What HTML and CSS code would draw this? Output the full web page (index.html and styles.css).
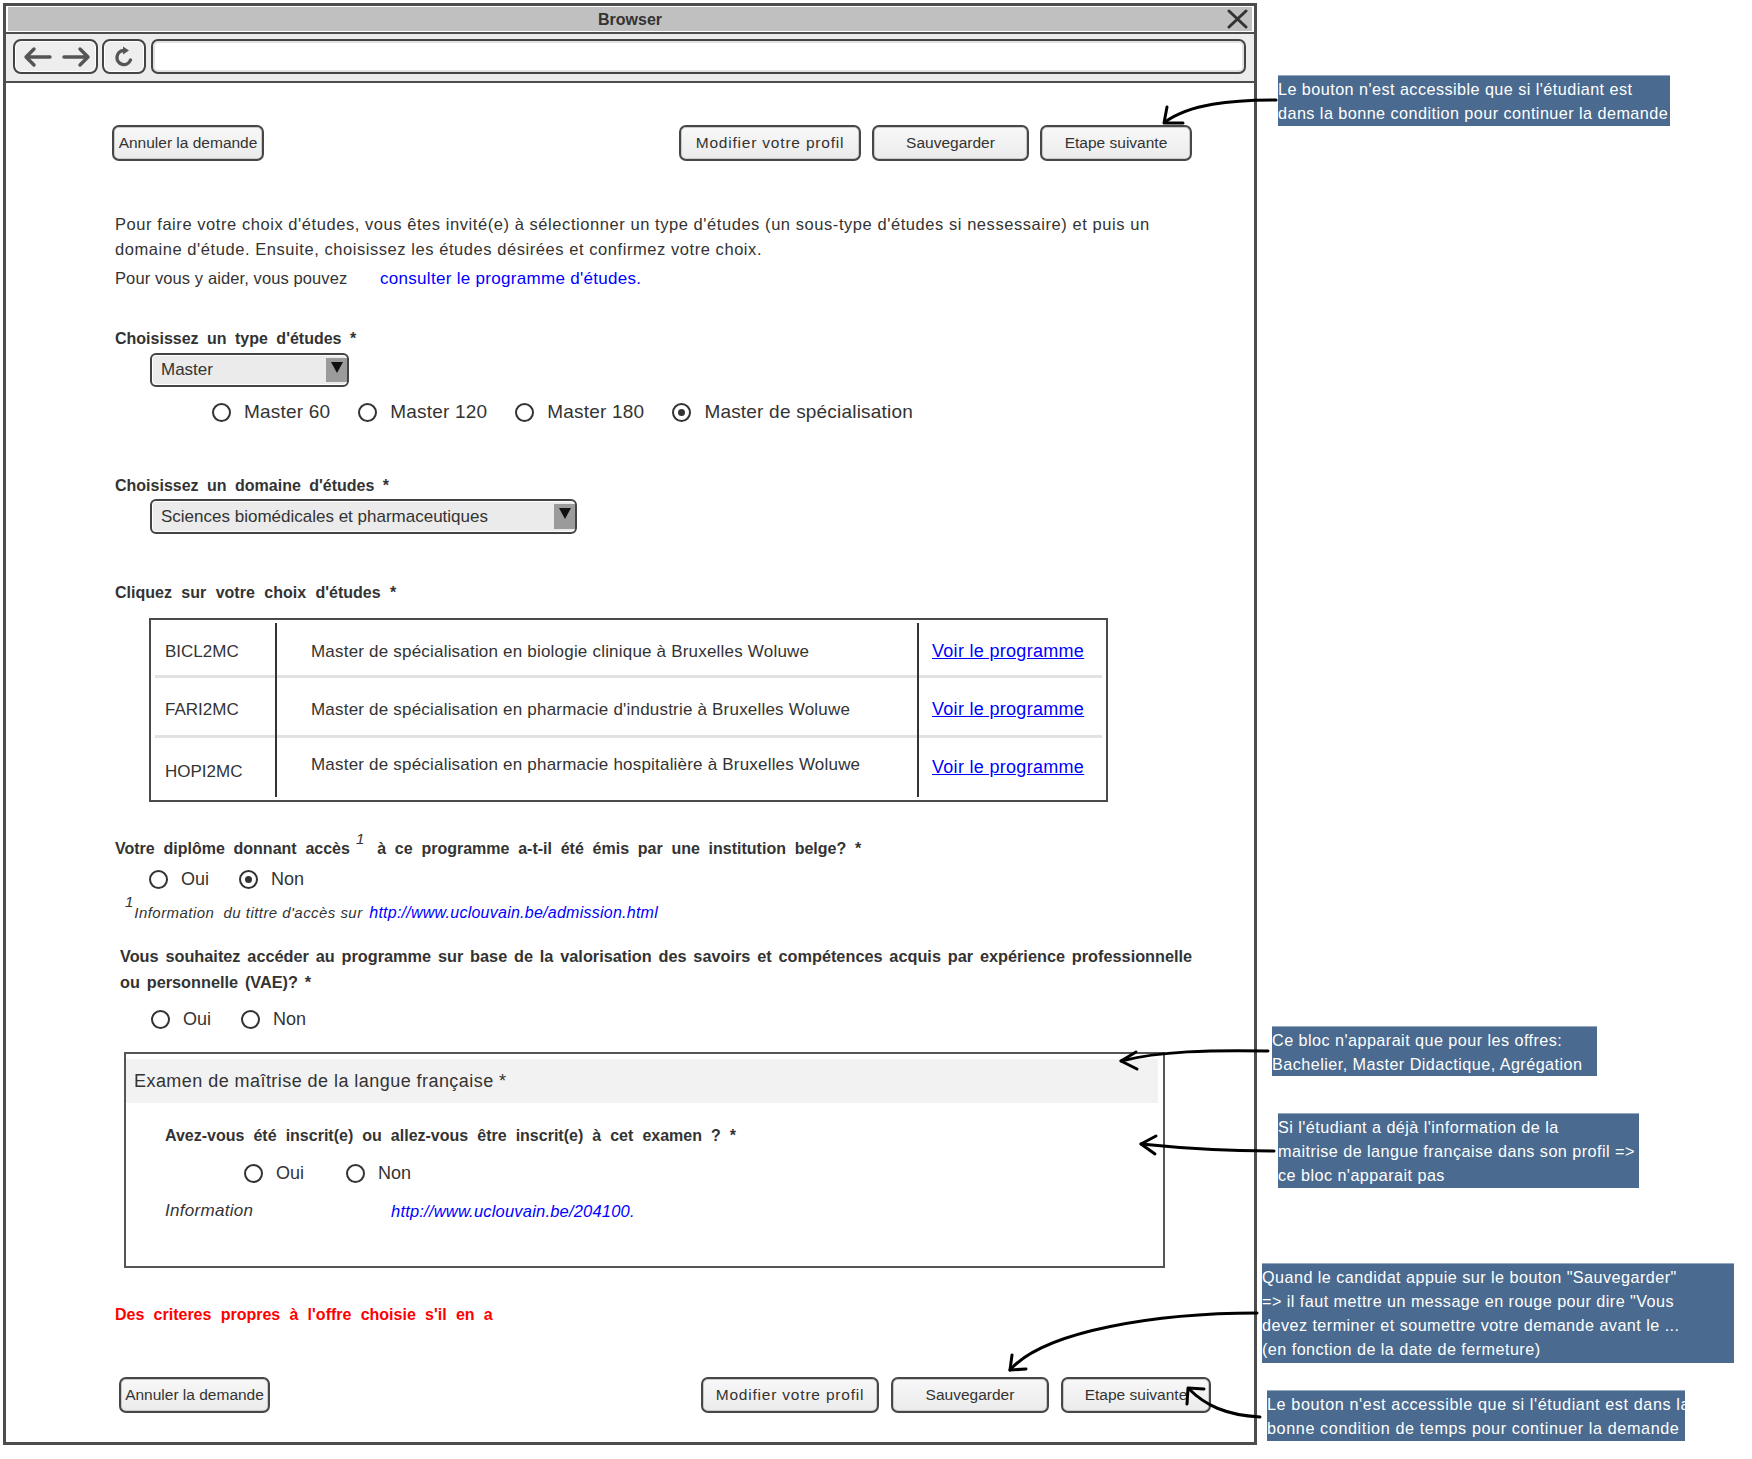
FILE: index.html
```html
<!DOCTYPE html>
<html lang="fr">
<head>
<meta charset="utf-8">
<title>Choix d'études</title>
<link rel="stylesheet" href="styles.css">
</head>
<body>
<div class="canvas">
  <div class="window">
    <div class="titlebar">
      <span></span>
      <span class="title">Browser</span>
      <svg class="close" width="21" height="20" viewBox="0 0 21 20"><path d="M2 2 L19 18 M19 2 L2 18" stroke="#333" stroke-width="3" stroke-linecap="round" fill="none"/></svg>
    </div>
    <div class="toolbar">
      <div class="tbtn navbtn">
        <svg width="76" height="24" viewBox="0 0 76 24"><path d="M8 12 H32 M16 4 L8 12 L16 20 M46 12 H70 M62 4 L70 12 L62 20" stroke="#555" stroke-width="3.4" stroke-linecap="round" stroke-linejoin="round" fill="none"/></svg>
      </div>
      <div class="tbtn reload">
        <svg width="22" height="24" viewBox="0 0 22 24"><path d="M11 5.5 A7 7 0 1 0 17.5 15" stroke="#555" stroke-width="3.4" fill="none" stroke-linecap="round"/><path d="M10 1.5 L16 5.5 L10 9.5 Z" fill="#555"/></svg>
      </div>
      <div class="address"></div>
    </div>
    <div class="content">
      <div class="btnrow btnrow-top">
        <div class="btn b-cancel">Annuler la demande</div>
        <div class="btngroup">
          <div class="btn b-modify">Modifier votre profil</div>
          <div class="btn b-save">Sauvegarder</div>
          <div class="btn b-next">Etape suivante</div>
        </div>
      </div>
      <div class="form">
        <p class="intro">Pour faire votre choix d'études, vous êtes invité(e) à sélectionner un type d'études (un sous-type d'études si nessessaire) et puis un<br>domaine d'étude. Ensuite, choisissez les études désirées et confirmez votre choix.</p>
        <p class="intro2">Pour vous y aider, vous pouvez <a class="link">consulter le programme d'études.</a></p>

        <p class="label l1">Choisissez un type d'études *</p>
        <div class="select s1"><span class="select-text">Master</span><span class="select-arrow"><span class="tri"></span></span></div>
        <div class="radios r1">
          <span class="radio"><span class="circle"></span>Master 60</span>
          <span class="radio"><span class="circle"></span>Master 120</span>
          <span class="radio"><span class="circle"></span>Master 180</span>
          <span class="radio"><span class="circle on"></span>Master de spécialisation</span>
        </div>

        <p class="label l2">Choisissez un domaine d'études *</p>
        <div class="select s2"><span class="select-text">Sciences biomédicales et pharmaceutiques</span><span class="select-arrow"><span class="tri"></span></span></div>

        <p class="label l3">Cliquez sur votre choix d'études *</p>
        <div class="table">
          <div class="col col-code">
            <div class="cell c1">BICL2MC</div>
            <div class="cell c2">FARI2MC</div>
            <div class="cell c3 code3">HOPI2MC</div>
          </div>
          <div class="col col-desc">
            <div class="cell c1">Master de spécialisation en biologie clinique à Bruxelles Woluwe</div>
            <div class="cell c2">Master de spécialisation en pharmacie d'industrie à Bruxelles Woluwe</div>
            <div class="cell c3 desc3">Master de spécialisation en pharmacie hospitalière à Bruxelles Woluwe</div>
          </div>
          <div class="col col-link">
            <div class="cell c1"><a class="tlink">Voir le programme</a></div>
            <div class="cell c2"><a class="tlink">Voir le programme</a></div>
            <div class="cell c3"><a class="tlink">Voir le programme</a></div>
          </div>
        </div>

        <p class="label q1">Votre diplôme donnant accès<span class="fn">1</span>à ce programme a-t-il été émis par une institution belge? *</p>
        <div class="radios r2">
          <span class="radio"><span class="circle"></span>Oui</span>
          <span class="radio"><span class="circle on"></span>Non</span>
        </div>
        <p class="footnote"><span class="fn fn2">1</span>Information&nbsp; du tittre d'accès sur <a class="flink">http://www.uclouvain.be/admission.html</a></p>

        <p class="label q2">Vous souhaitez accéder au programme sur base de la valorisation des savoirs et compétences acquis par expérience professionnelle<br>ou personnelle (VAE)? *</p>
        <div class="radios r3">
          <span class="radio"><span class="circle"></span>Oui</span>
          <span class="radio"><span class="circle"></span>Non</span>
        </div>

        <div class="box">
          <div class="box-head">Examen de maîtrise de la langue française *</div>
          <p class="label q3">Avez-vous été inscrit(e) ou allez-vous être inscrit(e) à cet examen ? *</p>
          <div class="radios r4">
            <span class="radio"><span class="circle"></span>Oui</span>
            <span class="radio"><span class="circle"></span>Non</span>
          </div>
          <p class="info"><span class="info-label">Information</span><a class="ilink">http://www.uclouvain.be/204100.</a></p>
        </div>

        <p class="red">Des criteres propres à l'offre choisie s'il en a</p>
      </div>
      <div class="btnrow btnrow-bottom">
        <div class="btn bb-cancel">Annuler la demande</div>
        <div class="btngroup btngroup-bottom">
          <div class="btn bb-modify">Modifier votre profil</div>
          <div class="btn bb-save">Sauvegarder</div>
          <div class="btn bb-next">Etape suivante</div>
        </div>
      </div>
    </div>
  </div>

  <div class="notes">
    <div class="note n1">Le bouton n'est accessible que si l'étudiant est<br>dans la bonne condition pour continuer la demande</div>
    <div class="note n2">Ce bloc n'apparait que pour les offres:<br>Bachelier, Master Didactique, Agrégation</div>
    <div class="note n3">Si l'étudiant a déjà l'information de la<br>maitrise de langue française dans son profil =&gt;<br>ce bloc n'apparait pas</div>
    <div class="note n4">Quand le candidat appuie sur le bouton "Sauvegarder"<br>=&gt; il faut mettre un message en rouge pour dire "Vous<br>devez terminer et soumettre votre demande avant le ...<br>(en fonction de la date de fermeture)</div>
    <div class="note n5">Le bouton n'est accessible que si l'étudiant est dans la<br>bonne condition de temps pour continuer la demande</div>
  </div>

  <svg class="arrows" width="1752" height="1459" viewBox="0 0 1752 1459">
    <g stroke="#000" stroke-width="3" fill="none" stroke-linecap="round" stroke-linejoin="round">
      <path d="M1276 100 C1230 100 1190 104 1165 122"/>
      <path d="M1167 107 L1164 123 L1183 123"/>
      <path d="M1268 1051 C1210 1050 1160 1051 1121 1061"/>
      <path d="M1136 1052 L1121 1061 L1137 1069"/>
      <path d="M1274 1151 C1220 1151 1180 1148 1141 1144"/>
      <path d="M1156 1136 L1141 1144 L1155 1154"/>
      <path d="M1257 1313 C1160 1313 1045 1330 1010 1370"/>
      <path d="M1012 1355 L1010 1370 L1026 1369"/>
      <path d="M1260 1417 C1225 1415 1205 1405 1189 1389"/>
      <path d="M1187 1404 L1188 1388 L1204 1389"/>
    </g>
  </svg>
</div>
</body>
</html>
```

FILE: styles.css
```css
* { box-sizing: border-box; }

body {
  margin: 0;
  background: #fff;
  font-family: "Liberation Sans", Arial, sans-serif;
  color: #333;
}

p { margin: 0; }

.canvas {
  position: relative;
  display: flex;
  align-items: flex-start;
  width: 1752px;
  height: 1459px;
  overflow: hidden;
}

/* ---------- browser window ---------- */
.window {
  margin: 3px 0 0 3px;
  width: 1254px;
  height: 1442px;
  border: 3px solid #4d4d4d;
  display: flex;
  flex-direction: column;
  flex: none;
}

.titlebar {
  margin: 1px 2px 1px;
  height: 24px;
  background: #c0c0c0;
  display: grid;
  grid-template-columns: 1fr auto 1fr;
  align-items: center;
}

.title {
  font-weight: bold;
  font-size: 16px;
  color: #333;
  padding-top: 2px;
}

.close {
  justify-self: end;
  margin-right: 4px;
}

.toolbar {
  height: 51px;
  border-top: 2px solid #4d4d4d;
  border-bottom: 2px solid #4d4d4d;
  background: #ececec;
  padding: 5px 8px 5px 7px;
  display: flex;
  gap: 4px;
}

.tbtn {
  height: 35px;
  border: 2px solid #444;
  border-radius: 8px;
  background: #eeeeee;
  box-shadow: inset 0 0 0 1px #fff;
  display: flex;
  align-items: center;
  justify-content: center;
}

.navbtn { width: 85px; }
.reload { width: 44px; margin-right: 1px; }

.address {
  flex: 1;
  height: 35px;
  border: 2px solid #444;
  border-radius: 7px;
  background: #fff;
  box-shadow: inset 0 0 0 2px #e2e2e2;
}

/* ---------- content ---------- */
.content {
  flex: 1;
  padding: 42px 62px 0 106px;
}

.btnrow {
  display: flex;
  justify-content: space-between;
  align-items: center;
  height: 36px;
}

.btnrow-bottom {
  margin: 51px -19px 0 7px;
}

.btngroup {
  display: flex;
  gap: 11px;
}

.btngroup-bottom { gap: 12px; }

.btn {
  height: 36px;
  border: 2px solid #474747;
  border-radius: 7px;
  background: linear-gradient(#f8f8f8, #ebebeb);
  box-shadow: inset 0 0 0 1px #c9c9c9;
  display: flex;
  align-items: center;
  justify-content: center;
  font-size: 15.5px;
  color: #333;
  white-space: nowrap;
}

.b-cancel { width: 152px; }
.b-modify { width: 182px; letter-spacing: 0.8px; }
.b-save { width: 157px; }
.b-next { width: 152px; }

.bb-cancel { width: 151px; }
.bb-modify { width: 178px; letter-spacing: 0.8px; }
.bb-save { width: 158px; }
.bb-next { width: 150px; }

.form { margin-left: 3px; }

.intro {
  margin-top: 51px;
  font-size: 16.5px;
  letter-spacing: 0.56px;
  line-height: 25px;
}

.intro2 {
  margin-top: 4px;
  font-size: 16.5px;
  letter-spacing: 0.1px;
  line-height: 25px;
}

.link {
  color: #0000ff;
  margin-left: 28px;
  font-size: 17px;
  letter-spacing: 0.3px;
}

.label {
  font-size: 16px;
  font-weight: bold;
  line-height: 22px;
  height: 22px;
  color: #333;
  word-spacing: 4px;
  white-space: nowrap;
}

.l1 { margin-top: 37px; }
.l2 { margin-top: 51px; }
.l3 { margin-top: 48px; word-spacing: 5px; }

/* selects */
.select {
  display: flex;
  border: 2px solid #444;
  border-radius: 6px;
  background: #ebebeb;
  box-shadow: inset 0 0 0 1px #fff;
  margin-left: 35px;
  padding: 3px 0 3px 0;
}

.s1 { width: 199px; height: 34px; margin-top: 3px; }
.s2 { width: 427px; height: 35px; margin-top: 2px; }

.select-text {
  flex: 1;
  padding-left: 9px;
  font-size: 17px;
  display: flex;
  align-items: center;
}

.select-arrow {
  width: 21px;
  background: #9b9b9b;
  display: flex;
  justify-content: center;
  padding-top: 4px;
}

.tri {
  width: 0;
  height: 0;
  border-left: 6px solid transparent;
  border-right: 6px solid transparent;
  border-top: 11px solid #111;
}

/* radios */
.radios {
  display: flex;
  align-items: center;
  height: 24px;
  font-size: 18px;
  gap: 26px;
}

.radio {
  display: inline-flex;
  align-items: center;
}

.circle {
  width: 19px;
  height: 19px;
  border: 2px solid #333;
  border-radius: 50%;
  margin-right: 13px;
  display: flex;
  align-items: center;
  justify-content: center;
  background: #fff;
}

.circle.on::after {
  content: "";
  width: 7px;
  height: 7px;
  border-radius: 50%;
  background: #333;
}

.r1 { margin-top: 13px; padding-left: 97px; gap: 28px; font-size: 19px; letter-spacing: 0.2px; }
.r2 { margin-top: 7px; padding-left: 34px; gap: 30px; }
.r3 { margin-top: 12px; padding-left: 36px; gap: 30px; }
.r4 { margin-top: 14px; padding-left: 118px; gap: 42px; }

/* table */
.table {
  margin: 14px 0 0 34px;
  width: 959px;
  height: 184px;
  border: 2px solid #4a4a4a;
  padding: 3px 4px;
  display: flex;
}

.col {
  display: flex;
  flex-direction: column;
}

.col-code { width: 122px; border-right: 2px solid #333; }
.col-desc { width: 642px; border-right: 2px solid #333; }
.col-link { flex: 1; }

.cell {
  display: flex;
  align-items: center;
  border-bottom: 3px solid #e2e2e2;
  font-size: 17px;
  letter-spacing: 0.2px;
  white-space: nowrap;
}

.cell.c1 { height: 55px; padding-top: 5px; }
.cell.c2 { height: 60px; padding-top: 6px; }
.cell.c3 { height: 59px; border-bottom: none; }

.col-code .cell { padding-left: 10px; letter-spacing: 0; }
.col-desc .cell { padding-left: 34px; }
.col-link .cell { padding-left: 13px; }

.code3 { padding-top: 9px; }
.desc3 { padding-bottom: 5px; }

.tlink {
  color: #0000ff;
  text-decoration: underline;
  font-size: 18px;
  letter-spacing: 0.3px;
}

/* questions */
.q1 { margin-top: 36px; word-spacing: 4.3px; }

.fn {
  font-style: italic;
  font-weight: normal;
  font-size: 15px;
  line-height: 0;
  vertical-align: 10px;
  margin: 0 13px 0 6px;
}

.footnote {
  margin-top: 11px;
  height: 22px;
  line-height: 22px;
  font-size: 15px;
  letter-spacing: 0.45px;
  font-style: italic;
  padding-left: 10px;
  white-space: nowrap;
}

.fn2 {
  margin: 0 1px 0 0;
  vertical-align: 11px;
  letter-spacing: 0;
}

.flink {
  color: #0000ff;
  font-size: 16px;
  font-style: italic;
  letter-spacing: 0.25px;
  margin-left: 2px;
}

.q2 {
  margin-top: 19px;
  margin-left: 5px;
  line-height: 26px;
  height: 52px;
  font-size: 16.3px;
  word-spacing: 2.3px;
}

/* french exam box */
.box {
  margin: 21px 0 0 9px;
  width: 1041px;
  height: 216px;
  border: 2px solid #555;
}

.box-head {
  margin: 5px 5px 0 0;
  height: 44px;
  background: #f2f2f2;
  padding-left: 8px;
  display: flex;
  align-items: center;
  font-size: 18px;
  letter-spacing: 0.45px;
}

.q3 {
  margin: 22px 0 0 39px;
  word-spacing: 4.6px;
}

.info {
  margin: 15px 0 0 39px;
  height: 22px;
  line-height: 22px;
  font-style: italic;
  font-size: 17px;
  letter-spacing: 0.3px;
  display: flex;
  align-items: center;
}

.info-label { width: 226px; }

.ilink {
  color: #0000ff;
  font-size: 16.5px;
  letter-spacing: 0.2px;
}

.red {
  margin-top: 36px;
  height: 22px;
  line-height: 22px;
  color: #ff0000;
  font-weight: bold;
  font-size: 16px;
  word-spacing: 4.8px;
}

/* ---------- annotation notes ---------- */
.notes {
  display: flex;
  flex-direction: column;
  align-items: flex-start;
}

.note {
  background: #4a6a8f;
  border-top: 1px solid #94a8c0;
  color: #fff;
  font-size: 16.2px;
  letter-spacing: 0.45px;
  line-height: 24px;
  white-space: nowrap;
  overflow: hidden;
  padding: 1px 0 1px 0;
}

.n1 { margin: 75px 0 0 21px; width: 392px; height: 51px; }
.n2 { margin: 900px 0 0 15px; width: 325px; height: 50px; }
.n3 { margin: 37px 0 0 21px; width: 361px; height: 75px; }
.n4 { margin: 75px 0 0 5px; width: 472px; height: 100px; }
.n5 { margin: 27px 0 0 10px; width: 418px; height: 51px; letter-spacing: 0.6px; }

/* ---------- arrows overlay ---------- */
.arrows {
  position: absolute;
  left: 0;
  top: 0;
  pointer-events: none;
}
```
